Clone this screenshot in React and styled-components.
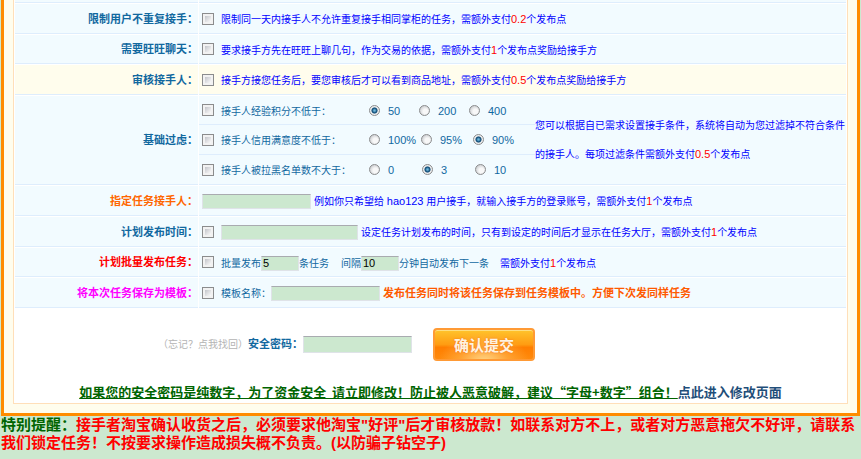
import React from "react";
import styled, { createGlobalStyle } from "styled-components";

const GlobalStyle = createGlobalStyle`
  * { box-sizing: border-box; }
  body {
    margin: 0;
    background: #cce8cf;
    color: #11689f;
    font: 10px/15px "Liberation Sans", "Noto Sans CJK SC", sans-serif;
  }
`;

const Frame = styled.form`
  margin: 0 1px;
  padding: 0 9px 9px;
  border: solid #ff8c00;
  border-width: 0 3px 3px;
  background: #fffded;
`;

const Panel = styled.div`
  border: solid #ffdfb9;
  border-width: 0 1px 1px;
  background: #fff;
`;

const Rows = styled.div`
  display: grid;
  gap: 1px;
  padding: 0 1px;
`;

const RowGrid = styled.div`
  display: grid;
  grid-template-columns: 183px minmax(0, 1fr);
  gap: 1px;
  min-height: ${(p) => p.$height || 30}px;
`;

const Cell = styled.div`
  display: flex;
  align-items: center;
  background: ${(p) => (p.$highlight ? "#fffded" : "#f2fbff")};
  border-bottom: 1px solid #deedfd;
`;

const LabelCell = styled(Cell)`
  justify-content: flex-end;
  padding-top: 1px;
  color: ${(p) => p.$color || "inherit"};
  font-size: 11px;
  font-weight: bold;
`;

const FieldCell = styled(Cell)`
  padding-left: 3px;
  padding-top: 2px;
  white-space: nowrap;
`;

const Checkbox = styled.input.attrs({ type: "checkbox" })`
  appearance: none;
  flex: none;
  width: 12px;
  height: 12px;
  margin: 0 7px 2px 0;
  border: 1px solid #8b8c8d;
  background: linear-gradient(135deg, #c3c5ca, #fbfbfb) content-box, #f2f2f2;
  padding: 2px;
  &:checked { background: #22648f content-box; }
`;

const Radio = styled.input.attrs({ type: "radio" })`
  appearance: none;
  flex: none;
  width: 11px;
  height: 11px;
  margin: 0 8px 2px 0;
  border: 1px solid #8b8c8d;
  border-radius: 50%;
  background: radial-gradient(circle at 60% 60%, #f8f8f8 30%, #c9cbce 80%);
  &:checked {
    background: radial-gradient(circle, #6fb9dd 0 8%, #16527c 36% 42%, #ececec 54%);
  }
`;

const TextInput = styled.input`
  width: ${(p) => p.$width}px;
  height: ${(p) => p.$height || 15}px;
  margin: 0 ${(p) => p.$after || 0}px 0 0;
  padding: 0 1px;
  border: 1px solid #dfe3e8;
  border-top-color: #a9abb0;
  background: #cce8cf;
  color: #000;
  font: 11px/12px "Liberation Sans", sans-serif;
`;

const Hint = styled.span`
  color: #00f;
`;

const Latin = styled.span`
  font-size: 11px;
`;

const Price = styled(Latin)`
  color: #f00;
`;

const Promo = styled.strong`
  color: #ff5a00;
  font-size: 11px;
`;

const Interval = styled.label`
  margin-left: 12px;
`;

const BatchHint = styled(Hint)`
  margin-left: 11px;
`;

const FilterBody = styled.div`
  display: grid;
  grid-template-columns: 336px minmax(0, 1fr);
  background: #f2fbff;
  border-bottom: 1px solid #deedfd;
`;

const FilterList = styled.div`
  display: grid;
  grid-template-rows: 29px 30px 29px;
`;

const FilterRow = styled.fieldset`
  display: flex;
  align-items: center;
  min-width: 0;
  margin: 0;
  padding: 2px 0 0 3px;
  border: 0;
  border-bottom: 1px solid #deedfd;
  white-space: nowrap;
  &:last-child { border-bottom: 0; }
`;

const FilterName = styled.label`
  width: 148px;
`;

const Options = styled.div`
  display: grid;
  grid-template-columns: repeat(3, ${(p) => p.$step}px);
`;

const Option = styled.label`
  display: flex;
  align-items: center;
  font-size: 11px;
`;

const FilterNote = styled.p`
  margin: 0;
  padding-top: 16px;
  color: #00f;
  line-height: 28px;
  white-space: nowrap;
`;

const SubmitRow = styled.div`
  display: flex;
  align-items: center;
  padding: 20px 0 0 144px;
`;

const ForgotLink = styled.a`
  color: #b4b4b4;
  text-decoration: none;
`;

const PasswordLabel = styled.label`
  font-size: 11px;
  font-weight: bold;
`;

const SubmitButton = styled.button`
  width: 102px;
  height: 33px;
  padding: 0;
  border: 2px solid #ff9a35;
  border-radius: 4px;
  background:
    radial-gradient(ellipse at 50% 110%, #ffd78a 0, #ffb44c99 35%, transparent 65%),
    linear-gradient(#ffc42c, #ff9c12 50%, #ff7e00 60%, #ff8a0c);
  box-shadow: inset 0 1px #ffdf80;
  color: #fff3e0;
  font: bold 15px/20px "Noto Sans CJK SC", sans-serif;
  text-shadow: 0 0 2px #f0701a;
`;

const Warning = styled.p`
  margin: 0;
  padding: 21px 0 2px;
  color: #1f4e79;
  font: bold 13px/19px "Noto Sans CJK SC", sans-serif;
  text-align: center;
  a { color: inherit; text-decoration: none; }
  u { color: #006400; }
`;

const Notice = styled.p`
  margin: 0 1px;
  color: #f00;
  font: bold 15px/18px "Liberation Sans", "Noto Sans CJK SC", sans-serif;
`;

const NoticeTitle = styled.span`
  color: #006400;
`;

function Row({ label, htmlFor, color, height, highlight, children }) {
  return (
    <RowGrid $height={height}>
      <LabelCell as="label" htmlFor={htmlFor} $color={color} $highlight={highlight}>
        {label}
      </LabelCell>
      <FieldCell $highlight={highlight}>{children}</FieldCell>
    </RowGrid>
  );
}

const filters = [
  { id: "exp", name: "接手人经验积分不低于：", step: 50, options: ["50", "200", "400"], value: "50" },
  { id: "credit", name: "接手人信用满意度不低于：", step: 52, options: ["100%", "95%", "90%"], value: "90%" },
  { id: "black", name: "接手人被拉黑名单数不大于：", step: 53, options: ["0", "3", "10"], value: "3" },
];

export default function App() {
  return (
    <div lang="zh-CN">
      <GlobalStyle />
      <Frame onSubmit={(e) => e.preventDefault()}>
        <Panel>
          <Rows>
            <RowGrid $height={3}>
              <Cell />
              <Cell />
            </RowGrid>
            <Row label="限制用户不重复接手：" htmlFor="norepeat">
              <Checkbox id="norepeat" />
              <Hint>
                限制同一天内接手人不允许重复接手相同掌柜的任务，需额外支付<Price>0.2</Price>个发布点
              </Hint>
            </Row>
            <Row label="需要旺旺聊天：" htmlFor="chat" height={29}>
              <Checkbox id="chat" />
              <Hint>
                要求接手方先在旺旺上聊几句，作为交易的依据，需额外支付<Price>1</Price>个发布点奖励给接手方
              </Hint>
            </Row>
            <Row label="审核接手人：" htmlFor="review" highlight>
              <Checkbox id="review" />
              <Hint>
                接手方接您任务后，要您审核后才可以看到商品地址，需额外支付<Price>0.5</Price>个发布点奖励给接手方
              </Hint>
            </Row>
            <RowGrid $height={89}>
              <LabelCell>基础过虑：</LabelCell>
              <FilterBody>
                <FilterList>
                  {filters.map((f) => (
                    <FilterRow key={f.id} aria-label={f.name}>
                      <Checkbox id={f.id} />
                      <FilterName htmlFor={f.id}>{f.name}</FilterName>
                      <Options $step={f.step}>
                        {f.options.map((o) => (
                          <Option key={o}>
                            <Radio name={f.id + "-value"} defaultChecked={o === f.value} />
                            {o}
                          </Option>
                        ))}
                      </Options>
                    </FilterRow>
                  ))}
                </FilterList>
                <FilterNote>
                  您可以根据自已需求设置接手条件，系统将自动为您过滤掉不符合条件
                  <br />
                  的接手人。每项过滤条件需额外支付<Price>0.5</Price>个发布点
                </FilterNote>
              </FilterBody>
            </RowGrid>
            <Row label="指定任务接手人：" htmlFor="taker" color="#ff6600">
              <TextInput id="taker" $width={109} $after={3} />
              <Hint>
                例如你只希望给 <Latin>hao123</Latin> 用户接手，就输入接手方的登录账号，需额外支付
                <Price>1</Price>个发布点
              </Hint>
            </Row>
            <Row label="计划发布时间：" htmlFor="plan">
              <Checkbox id="plan" />
              <TextInput aria-label="计划发布时间" $width={137} $after={3} />
              <Hint>
                设定任务计划发布的时间，只有到设定的时间后才显示在任务大厅，需额外支付<Price>1</Price>个发布点
              </Hint>
            </Row>
            <Row label="计划批量发布任务：" htmlFor="batch" color="#f00" height={29}>
              <Checkbox id="batch" />
              <label htmlFor="count">批量发布</label>
              <TextInput id="count" $width={38} defaultValue="5" />
              条任务
              <Interval htmlFor="minutes">间隔</Interval>
              <TextInput id="minutes" $width={38} defaultValue="10" />
              分钟自动发布下一条
              <BatchHint>
                需额外支付<Price>1</Price>个发布点
              </BatchHint>
            </Row>
            <Row label="将本次任务保存为模板：" htmlFor="save" color="#f0f">
              <Checkbox id="save" />
              <label htmlFor="template">模板名称：</label>
              <TextInput id="template" $width={109} $after={3} />
              <Promo>发布任务同时将该任务保存到任务模板中。方便下次发同样任务</Promo>
            </Row>
          </Rows>
          <SubmitRow>
            <ForgotLink href="#forgot">（忘记？点我找回）</ForgotLink>
            <PasswordLabel htmlFor="password">安全密码：</PasswordLabel>
            <TextInput id="password" type="password" $width={109} $height={17} $after={21} />
            <SubmitButton type="submit">确认提交</SubmitButton>
          </SubmitRow>
          <Warning>
            <u>如果您的安全密码是纯数字，为了资金安全&nbsp; 请立即修改！防止被人恶意破解，建议“字母+数字”组合！</u>
            <a href="#change">点此进入修改页面</a>
          </Warning>
        </Panel>
      </Frame>
      <Notice>
        <NoticeTitle>特别提醒：</NoticeTitle>
        接手者淘宝确认收货之后，必须要求他淘宝"好评"后才审核放款！如联系对方不上，或者对方恶意拖欠不好评，请联系我们锁定任务！不按要求操作造成损失概不负责。(以防骗子钻空子)
      </Notice>
    </div>
  );
}
